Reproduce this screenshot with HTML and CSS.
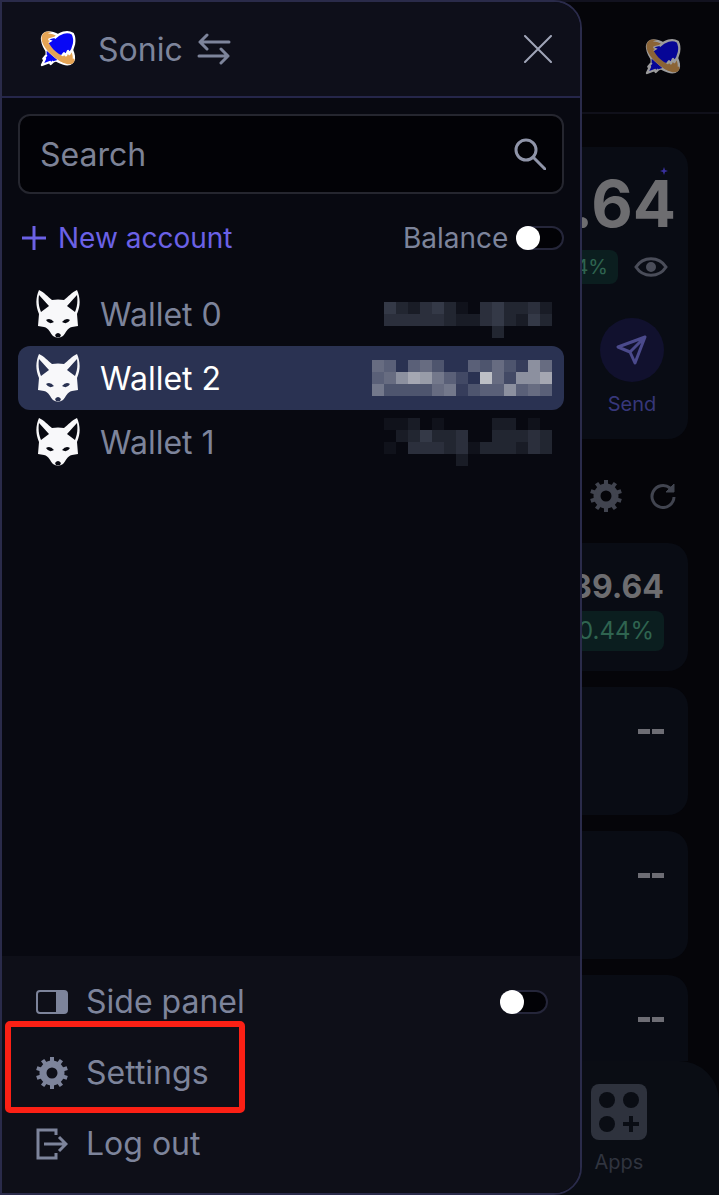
FILE: index.html
```html
<!DOCTYPE html>
<html lang="en">
<head>
    <meta charset="UTF-8">
    <meta name="viewport" content="width=device-width, initial-scale=1.0">
    <title>Wallet</title>
    <link rel="stylesheet" href="styles.css">
</head>
<body>
    <svg class="sprite" width="0" height="0" aria-hidden="true">
        <symbol id="sonic" viewBox="24 27 120 120">
            <g stroke="#fff" stroke-width="7" stroke-linejoin="round">
                <ellipse cx="84" cy="85" rx="60" ry="31" transform="rotate(45 84 85)" fill="#e5a455"/>
                <path d="M50 92L82 120L70 124L62 132L60 126L36 135L45 116L40 116L50 104Z" fill="#0808f5"/>
                <path d="M56 70L68 62L58 58L74 54C88 38 112 31 128 41C138 60 132 84 118 102L114 93L108 106L102 100L94 110C74 98 60 84 56 70Z" fill="#0808f5"/>
            </g>
            <path d="M56 70L68 62L58 58L74 54L80 90L94 110C74 98 60 84 56 70ZM50 92L82 120L70 124L50 104Z" fill="#0808f5"/>
            <path d="M66 37C48 38 48 54 58 72C72 94 96 116 133 116C136 130 122 136 108 131C86 125 60 104 46 84C34 66 30 48 42 38C50 33 60 34 66 37Z" fill="#e5a455"/>
        </symbol>
        <symbol id="gear" viewBox="0 0 32 32">
            <circle cx="16" cy="16" r="9" fill="none" stroke="currentColor" stroke-width="7"/>
            <g stroke="currentColor" stroke-width="4">
                <path d="M16 0v6M16 26v6"/>
                <path d="M16 0v6M16 26v6" transform="rotate(36 16 16)"/>
                <path d="M16 0v6M16 26v6" transform="rotate(72 16 16)"/>
                <path d="M16 0v6M16 26v6" transform="rotate(108 16 16)"/>
                <path d="M16 0v6M16 26v6" transform="rotate(144 16 16)"/>
            </g>
        </symbol>
        <symbol id="fox" viewBox="0 0 44 48">
            <path fill="#f8f8fa" fill-rule="evenodd" d="M3 0 C8 2 12 7 16 10 Q22 9 28 10 C32 7 36 2 41 0 C44 7 45 15 41 24 L42 36 L36 37 C31 38 30 43 27 46 Q22 49 17 46 C14 43 13 38 8 37 L2 36 L3 24 C-1 15 0 7 3 0Z M3 5 C2 12 3 17 5 22 L13 16Z M41 5 L31 16 L39 22 C41 17 42 12 41 5Z M10 30 Q14 27 18 32 Q13 35 10 30Z M34 30 Q30 27 26 32 Q31 35 34 30Z M19 45 Q22 41 25 45 L24 47 H20Z"/>
        </symbol>
    </svg>

    <div class="app">
        <header class="app-header">
            <svg class="logo"><use href="#sonic"/></svg>
        </header>
        <main class="app-main">
            <section class="card hero">
                <svg class="spark" viewBox="0 0 8 8"><path d="M4 0l1 3 3 1-3 1-1 3-1-3-3-1 3-1z" fill="#3a31a0"/></svg>
                <div class="total">.64</div>
                <div class="change">
                    <span class="badge small">4%</span>
                    <svg class="eye" viewBox="0 0 34 20" fill="none" stroke="#4a4d59" stroke-width="3"><path d="M2 10C9-1 25-1 32 10C25 21 9 21 2 10Z"/><circle cx="17" cy="10" r="4" fill="#4a4d59" stroke-width="2"/></svg>
                </div>
                <button class="send" type="button">
                    <span class="send-icon">
                        <svg viewBox="0 0 32 32" fill="none" stroke="#4b4a8c" stroke-width="3" stroke-linejoin="round"><path d="M29 3L2 13L14 18L19 29Z M29 3L14 18"/></svg>
                    </span>
                    Send
                </button>
            </section>
            <div class="tools">
                <svg class="icon"><use href="#gear"/></svg>
                <svg class="refresh" viewBox="0 0 26 26" fill="none" stroke="currentColor" stroke-width="3"><path d="M24 14A11 11 0 1 1 20 5L23 8"/><path d="M24 1v8h-8z" fill="currentColor" stroke-width="1"/></svg>
            </div>
            <section class="card token">
                <strong>39.64</strong>
                <span class="badge">0.44%</span>
            </section>
            <section class="card token"><span class="dashes"><i></i><i></i></span></section>
            <section class="card token"><span class="dashes"><i></i><i></i></span></section>
            <section class="card token"><span class="dashes"><i></i><i></i></span></section>
        </main>
        <nav class="app-nav">
            <a class="nav-item" href="#">
                <svg viewBox="0 0 56 56"><rect width="56" height="56" rx="8" fill="#2e323d"/><g fill="#0a0d14"><circle cx="16" cy="16" r="8"/><circle cx="40" cy="16" r="8"/><circle cx="16" cy="40" r="8"/><path d="M38 32h4v6h6v4h-6v6h-4v-6h-6v-4h6z"/></g></svg>
                Apps
            </a>
        </nav>
    </div>

    <aside class="drawer">
        <header class="drawer-header">
            <svg class="logo"><use href="#sonic"/></svg>
            <button class="network" type="button">
                Sonic
                <svg class="swap" viewBox="0 0 34 32" fill="none" stroke="currentColor" stroke-width="3" stroke-linecap="round" stroke-linejoin="round"><path d="M32 9H3M10 2L3 9L10 16M2 23H31M24 16L31 23L24 30"/></svg>
            </button>
            <button class="close" type="button" aria-label="Close">
                <svg viewBox="0 0 28 28" fill="none" stroke="currentColor" stroke-width="2" stroke-linecap="round"><path d="M1 1L27 27M27 1L1 27"/></svg>
            </button>
        </header>

        <div class="drawer-body">
            <div class="search">
                <input type="text" placeholder="Search" aria-label="Search">
                <svg viewBox="0 0 32 32" fill="none" stroke="currentColor" stroke-width="3" stroke-linecap="round"><circle cx="12" cy="12" r="10"/><path d="M19 19L31 31"/></svg>
            </div>
            <div class="actions">
                <button class="new-account" type="button">
                    <svg viewBox="0 0 24 24" stroke="currentColor" stroke-width="3"><path d="M12 0V24M0 12H24"/></svg>
                    New account
                </button>
                <label class="balance" for="balance">Balance
                    <input class="switch" type="checkbox" id="balance">
                </label>
            </div>
            <ul class="wallets">
                <li class="wallet">
                    <svg class="fox"><use href="#fox"/></svg>
                    <span>Wallet 0</span>
                    <svg class="amount" height="24" data-rows="053245310453342,044444322453253,000000000030000"></svg>
                </li>
                <li class="wallet active">
                    <svg class="fox"><use href="#fox"/></svg>
                    <span>Wallet 2</span>
                    <svg class="amount" height="36" data-rows="540453004353185,458a96420c5288a7,633335613448454"></svg>
                </li>
                <li class="wallet">
                    <svg class="fox"><use href="#fox"/></svg>
                    <span>Wallet 1</span>
                    <svg class="amount" height="48" data-rows="011201000022010,002353340033343,010444341333243,000000020000000"></svg>
                </li>
            </ul>
        </div>

        <footer class="drawer-footer">
            <label class="menu-item" for="side-panel">
                <svg class="icon" viewBox="0 0 32 32"><rect x="1" y="5" width="30" height="22" rx="3" fill="none" stroke="currentColor" stroke-width="2"/><path d="M20 5h9q2 0 2 2v18q0 2-2 2h-9z" fill="currentColor"/></svg>
                Side panel
                <input class="switch" type="checkbox" id="side-panel">
            </label>
            <a class="menu-item highlight" href="#">
                <svg class="icon"><use href="#gear"/></svg>
                Settings
            </a>
            <a class="menu-item" href="#">
                <svg class="icon" viewBox="0 0 32 32" fill="none" stroke="currentColor" stroke-width="3"><path d="M20 7V2H2V30H20V25"/><path d="M8 16H30M23 9L30 16L23 23"/></svg>
                Log out
            </a>
        </footer>
    </aside>

    <script src="script.js"></script>
</body>
</html>
```
FILE: styles.css
```css
*, ::before, ::after {
    box-sizing: border-box;
}
body {
    margin: 0;
    background: #050509;
    color: #7d849b;
    font-family: Inter, "Noto Sans", sans-serif;
    font-size: 32px;
    overflow: hidden;
}
svg {
    display: block;
    flex: none;
}
.sprite {
    position: absolute;
}
button {
    padding: 0;
    border: none;
    background: none;
    color: inherit;
    font: inherit;
    cursor: pointer;
}
a {
    color: inherit;
    text-decoration: none;
}
.logo {
    width: 40px;
    height: 40px;
}
.icon {
    width: 32px;
    height: 32px;
}

/* page behind the drawer */
.app {
    display: flex;
    flex-direction: column;
    height: 100vh;
}
.app-header {
    display: flex;
    justify-content: flex-end;
    align-items: center;
    flex: none;
    height: 114px;
    padding-right: 36px;
    border-top: 2px solid #12121f;
    border-bottom: 2px solid #10101a;
}
.app-header .logo {
    opacity: 0.6;
}
.app-main {
    display: flex;
    flex-direction: column;
    gap: 16px;
    flex: 1;
    min-height: 0;
    overflow: hidden;
    padding: 33px 31px 0;
}
.card {
    flex: none;
    border-radius: 20px;
    background: #090c14;
}
.hero {
    position: relative;
    display: flex;
    flex-direction: column;
    align-items: flex-end;
    height: 292px;
    padding: 25px 12px;
}
.spark {
    position: absolute;
    top: 20px;
    right: 20px;
    width: 8px;
    height: 8px;
}
.total {
    color: #6d6d70;
    font-size: 64px;
    font-weight: 700;
    line-height: 64px;
}
.change {
    display: flex;
    align-items: center;
    gap: 16px;
    margin: 14px 8px 34px 0;
}
.eye {
    width: 34px;
    height: 20px;
}
.badge {
    padding: 0 10px;
    border-radius: 8px;
    background: #0b1e1f;
    color: #2f6450;
    font-size: 24px;
    line-height: 40px;
}
.badge.small {
    font-size: 20px;
    line-height: 34px;
}
.send {
    display: flex;
    flex-direction: column;
    align-items: center;
    gap: 8px;
    margin-right: 12px;
    color: #37377a;
    font-size: 20px;
    line-height: 28px;
}
.send-icon {
    display: grid;
    place-items: center;
    width: 64px;
    height: 64px;
    border-radius: 50%;
    background: #11112e;
}
.send-icon svg {
    width: 32px;
    height: 32px;
}
.tools {
    display: flex;
    justify-content: flex-end;
    align-items: center;
    gap: 28px;
    flex: none;
    height: 72px;
    padding: 10px 12px 0;
    color: #41444f;
}
.refresh {
    width: 26px;
    height: 26px;
}
.token {
    display: flex;
    flex-direction: column;
    align-items: flex-end;
    gap: 4px;
    height: 128px;
    padding: 24px;
    color: #6d6d70;
    line-height: 40px;
}
.dashes {
    display: flex;
    gap: 2px;
    padding-top: 18px;
}
.dashes i {
    width: 12px;
    height: 5px;
    background: #6d6d74;
}
.app-nav {
    display: flex;
    justify-content: flex-end;
    flex: none;
    height: 134px;
    padding: 23px 68px 0;
    border-top-right-radius: 40px;
    background: #0a0d14;
}
.nav-item {
    display: flex;
    flex-direction: column;
    align-items: center;
    gap: 8px;
    width: 64px;
    color: #30343f;
    font-size: 20px;
    line-height: 28px;
}
.nav-item svg {
    width: 56px;
    height: 56px;
}

/* drawer */
.drawer {
    position: absolute;
    top: 0;
    left: 0;
    display: flex;
    flex-direction: column;
    width: 81%;
    height: 100vh;
    border: 2px solid #2a2b4a;
    border-radius: 0 28px 28px 0;
    background: #080911;
    overflow: hidden;
}
.drawer-header {
    display: flex;
    align-items: center;
    gap: 20px;
    height: 96px;
    padding: 0 28px 0 36px;
    border-bottom: 2px solid #25264a;
    background: #0e0f1a;
}
.network {
    display: flex;
    align-items: center;
    gap: 14px;
}
.swap {
    width: 34px;
    height: 32px;
}
.close {
    margin-left: auto;
    color: #a0a5b8;
}
.close svg {
    width: 28px;
    height: 28px;
}
.drawer-body {
    flex: 1;
    padding: 16px;
}
.search {
    display: flex;
    align-items: center;
    height: 80px;
    padding: 0 16px 0 20px;
    border: 2px solid #25262f;
    border-radius: 12px;
    background: #020206;
    color: #8f94a8;
}
.search input {
    flex: 1;
    min-width: 0;
    padding: 0;
    border: none;
    outline: none;
    background: none;
    color: inherit;
    font: inherit;
}
.search input::placeholder {
    color: #7d8296;
    opacity: 1;
}
.search svg {
    width: 32px;
    height: 32px;
}
.actions {
    display: flex;
    justify-content: space-between;
    align-items: center;
    height: 88px;
    padding-left: 4px;
    font-size: 28px;
}
.new-account {
    display: flex;
    align-items: center;
    gap: 12px;
    color: #6b61e6;
}
.new-account svg {
    width: 24px;
    height: 24px;
}
.balance {
    display: flex;
    align-items: center;
    gap: 8px;
}
.switch {
    appearance: none;
    position: relative;
    width: 48px;
    height: 24px;
    margin: 0;
    border: 2px solid #25263a;
    border-radius: 12px;
    background: #020206;
}
.switch::before {
    content: "";
    position: absolute;
    top: -2px;
    left: -2px;
    width: 24px;
    height: 24px;
    border-radius: 50%;
    background: #fff;
}
.switch:checked::before {
    left: 22px;
}
.wallets {
    margin: 0;
    padding: 0;
    list-style: none;
}
.wallet {
    display: flex;
    align-items: center;
    gap: 20px;
    height: 64px;
    padding: 0 12px 0 18px;
    border-radius: 12px;
}
.wallet.active {
    background: #2a3252;
    color: #fff;
}
.fox {
    width: 44px;
    height: 48px;
}
.amount {
    width: 180px;
    margin-left: auto;
    overflow: visible;
    fill: #8e9ab5;
}
.active .amount {
    fill: #e2e2e2;
}
.drawer-footer {
    padding: 10px 32px 14px;
    background: #0e0f18;
}
.menu-item {
    position: relative;
    display: flex;
    align-items: center;
    gap: 18px;
    height: 71px;
    padding-left: 2px;
}
.menu-item .switch {
    margin-left: auto;
}
.highlight::after {
    content: "";
    position: absolute;
    top: -16px;
    left: -29px;
    width: 240px;
    height: 92px;
    border: 6px solid #fb2015;
    border-radius: 5px;
}
```
FILE: script.js
```js
// hidden balances: one hex digit per 12px cell, 0 is clear
document.querySelectorAll('.amount').forEach(function(svg) {
    svg.dataset.rows.split(',').forEach(function(row, y) {
        row.slice(0, 15).split('').forEach(function(digit, x) {
            const cell = document.createElementNS('http://www.w3.org/2000/svg', 'rect');
            cell.setAttribute('x', x * 12);
            cell.setAttribute('y', y * 12);
            cell.setAttribute('width', 12);
            cell.setAttribute('height', 12);
            cell.setAttribute('fill-opacity', parseInt(digit, 16) / 15);
            svg.appendChild(cell);
        });
    });
});
```
